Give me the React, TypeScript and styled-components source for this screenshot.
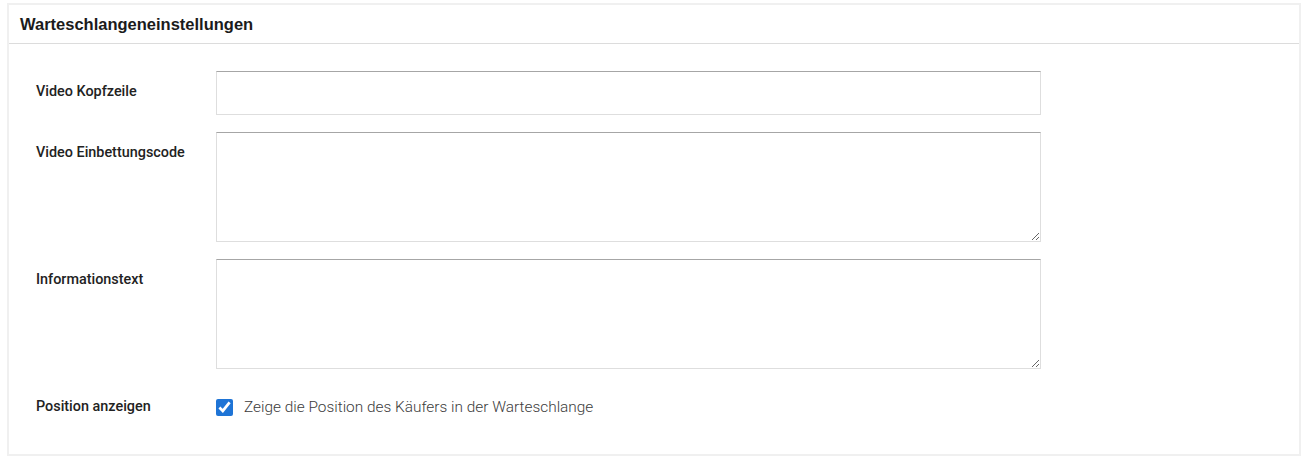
import React, { useState } from 'react';
import styled, { createGlobalStyle } from 'styled-components';

const GlobalStyle = createGlobalStyle`
  body {
    margin: 0;
    background: #ffffff;
    font-family: Roboto, "Liberation Sans", Arial, sans-serif;
  }
`;

const Page = styled.div`
  padding: 3px 3px 3px 7px;
`;

const Card = styled.section`
  border: 2px solid #f0f0f0;
  background: #fff;
`;

const CardHeader = styled.div`
  height: 38px;
  padding: 0 11px;
  display: flex;
  align-items: center;
  border-bottom: 1px solid #dcdcdc;
`;

const CardTitle = styled.h3`
  margin: 0;
  font-family: "Liberation Sans", Arial, sans-serif;
  font-size: 16.5px;
  font-weight: 700;
  color: #1b1b1b;
`;

const CardBody = styled.div`
  padding: 27px 27px 38px 27px;
  display: flex;
  flex-direction: column;
  gap: 17px;
`;

const Row = styled.div<{ $spaced?: boolean }>`
  display: grid;
  grid-template-columns: 180px 825px;
  align-items: start;
  margin-top: ${p => (p.$spaced ? '12px' : '0')};
`;

const Label = styled.label<{ $center?: boolean }>`
  padding-top: ${p => (p.$center ? '0' : '12px')};
  font-size: 14.4px;
  font-weight: 500;
  color: #222;
  line-height: 18px;
  align-self: ${p => (p.$center ? 'center' : 'start')};
`;

const fieldBorder = `
  border: 1px solid #dedede;
  border-top-color: #a6a6a6;
  border-radius: 0;
  outline: none;
  box-sizing: border-box;
  font-family: Roboto, "Liberation Sans", Arial, sans-serif;
  font-size: 14px;
  color: #333;
  background: #fff;
`;

const TextInput = styled.input`
  ${fieldBorder}
  width: 825px;
  height: 44px;
  padding: 0 10px;
`;

const TextArea = styled.textarea`
  ${fieldBorder}
  display: block;
  width: 825px;
  height: 110px;
  padding: 8px 10px;
  resize: vertical;
`;

const CheckLine = styled.label`
  display: flex;
  align-items: center;
  gap: 11px;
  font-size: 15.4px;
  font-weight: 300;
  color: #3c3c3c;
  cursor: pointer;
`;

const CheckBox = styled.input`
  width: 17px;
  height: 17px;
  margin: 0;
  accent-color: #1e74d6;
`;

const App: React.FC = () => {
  const [showPosition, setShowPosition] = useState(true);

  return (
    <Page>
      <GlobalStyle />
      <Card>
        <CardHeader>
          <CardTitle>Warteschlangeneinstellungen</CardTitle>
        </CardHeader>
        <CardBody>
          <Row>
            <Label htmlFor="video-header">Video Kopfzeile</Label>
            <TextInput id="video-header" type="text" />
          </Row>
          <Row>
            <Label htmlFor="video-embed">Video Einbettungscode</Label>
            <TextArea id="video-embed" />
          </Row>
          <Row>
            <Label htmlFor="info-text">Informationstext</Label>
            <TextArea id="info-text" />
          </Row>
          <Row $spaced>
            <Label $center>Position anzeigen</Label>
            <CheckLine>
              <CheckBox
                type="checkbox"
                checked={showPosition}
                onChange={e => setShowPosition(e.target.checked)}
              />
              Zeige die Position des Käufers in der Warteschlange
            </CheckLine>
          </Row>
        </CardBody>
      </Card>
    </Page>
  );
};

export default App;
